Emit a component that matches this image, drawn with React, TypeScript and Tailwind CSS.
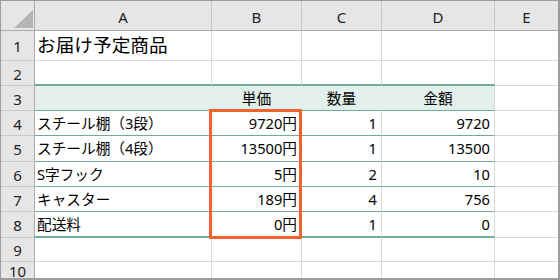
import React from "react";

type Align = "left" | "right" | "center";

const GREEN = "border-b-[#6fae95]";

function Cell({
  children,
  className = "",
  align = "left",
}: {
  children?: React.ReactNode;
  className?: string;
  align?: Align;
}) {
  const justify =
    align === "right" ? "justify-end pr-[4px]" : align === "center" ? "justify-center" : "justify-start pl-[2px]";
  return (
    <div className={`flex items-center overflow-hidden whitespace-nowrap leading-none ${justify} ${className}`}>
      {children}
    </div>
  );
}

function ColHead({ label, last = false }: { label: string; last?: boolean }) {
  return (
    <div
      className={`flex items-center justify-center pt-[3px] bg-[#e6e6e6] border-b border-b-[#a9a9a9] text-[15px] text-[#222] leading-none ${
        last ? "" : "border-r border-r-[#c8c8c8]"
      }`}
    >
      {label}
    </div>
  );
}

function RowHead({ n }: { n: number }) {
  return (
    <div className="flex items-center justify-center pt-[2px] bg-[#e6e6e6] border-r border-r-[#a9a9a9] border-b border-b-[#c8c8c8] text-[15px] text-[#222] leading-none">
      {n}
    </div>
  );
}

const plain = "border-r border-b border-[#d9d9d9]";
const plainE = "border-b border-[#d9d9d9]";

type Item = { name: string; price: string; qty: string; total: string };

const items: Item[] = [
  { name: "スチール棚（3段）", price: "9720円", qty: "1", total: "9720" },
  { name: "スチール棚（4段）", price: "13500円", qty: "1", total: "13500" },
  { name: "S字フック", price: "5円", qty: "2", total: "10" },
  { name: "キャスター", price: "189円", qty: "4", total: "756" },
  { name: "配送料", price: "0円", qty: "1", total: "0" },
];

export default function App() {
  return (
    <div className="w-[560px] h-[280px] bg-white font-['Noto_Sans','Noto_Sans_CJK_JP',sans-serif] text-black">
      <div className="relative w-full h-full border-t border-l border-r-2 border-b-2 border-[#9c9c9c] overflow-hidden">
        <div className="grid h-full grid-cols-[34px_177px_90px_80px_113px_1fr] grid-rows-[30px_30px_25px_25px_25px_26px_25px_25px_26px_24px_1fr] text-[14.67px]">
          {/* column headers */}
          <div className="relative bg-[#e6e6e6] border-r border-r-[#a9a9a9] border-b border-b-[#a9a9a9]">
            <svg className="absolute left-[13px] top-[9px]" width="19" height="18" viewBox="0 0 19 18">
              <polygon points="19,0 19,18 0,18" fill="#b4b4b4" />
            </svg>
          </div>
          <ColHead label="A" />
          <ColHead label="B" />
          <ColHead label="C" />
          <ColHead label="D" />
          <ColHead label="E" last />

          {/* row 1 */}
          <RowHead n={1} />
          <Cell className={`${plain} text-[18.67px]`}>お届け予定商品</Cell>
          <Cell className={plain} />
          <Cell className={plain} />
          <Cell className={plain} />
          <Cell className={plainE} />

          {/* row 2 */}
          <RowHead n={2} />
          <Cell className={`border-r border-r-[#d9d9d9] border-b-2 ${GREEN}`} />
          <Cell className={`border-r border-r-[#d9d9d9] border-b-2 ${GREEN}`} />
          <Cell className={`border-r border-r-[#d9d9d9] border-b-2 ${GREEN}`} />
          <Cell className={`border-r border-r-[#d9d9d9] border-b-2 ${GREEN}`} />
          <Cell className={plainE} />

          {/* row 3: table header */}
          <RowHead n={3} />
          <Cell className={`bg-[#e2efea] border-r border-r-[#e2efea] border-b ${GREEN}`} />
          <Cell align="center" className={`bg-[#e2efea] border-r border-r-[#e2efea] border-b ${GREEN}`}>
            単価
          </Cell>
          <Cell align="center" className={`bg-[#e2efea] border-r border-r-[#e2efea] border-b ${GREEN}`}>
            数量
          </Cell>
          <Cell align="center" className={`bg-[#e2efea] border-r border-r-[#d9d9d9] border-b ${GREEN}`}>
            金額
          </Cell>
          <Cell className={plainE} />

          {/* rows 4-8: items */}
          {items.map((it, i) => {
            const last = i === items.length - 1;
            const bottom = last ? `border-b-2 ${GREEN}` : `border-b ${GREEN}`;
            return (
              <React.Fragment key={it.name}>
                <RowHead n={i + 4} />
                <Cell className={`border-r border-r-[#d9d9d9] ${bottom}`}>{it.name}</Cell>
                <Cell align="right" className={`border-r border-r-[#d9d9d9] ${bottom}`}>
                  {it.price}
                </Cell>
                <Cell align="right" className={`border-r border-r-[#d9d9d9] ${bottom}`}>
                  {it.qty}
                </Cell>
                <Cell align="right" className={`border-r border-r-[#d9d9d9] ${bottom}`}>
                  {it.total}
                </Cell>
                <Cell className={plainE} />
              </React.Fragment>
            );
          })}

          {/* rows 9-10 */}
          <RowHead n={9} />
          <Cell className={plain} />
          <Cell className={plain} />
          <Cell className={plain} />
          <Cell className={plain} />
          <Cell className={plainE} />

          <RowHead n={10} />
          <Cell className={plain} />
          <Cell className={plain} />
          <Cell className={plain} />
          <Cell className={plain} />
          <Cell className={plainE} />
        </div>

        {/* highlight around the unit price column */}
        <div className="absolute left-[208px] top-[108px] w-[93px] h-[130px] border-[3px] border-[#f0632b] pointer-events-none" />
      </div>
    </div>
  );
}
